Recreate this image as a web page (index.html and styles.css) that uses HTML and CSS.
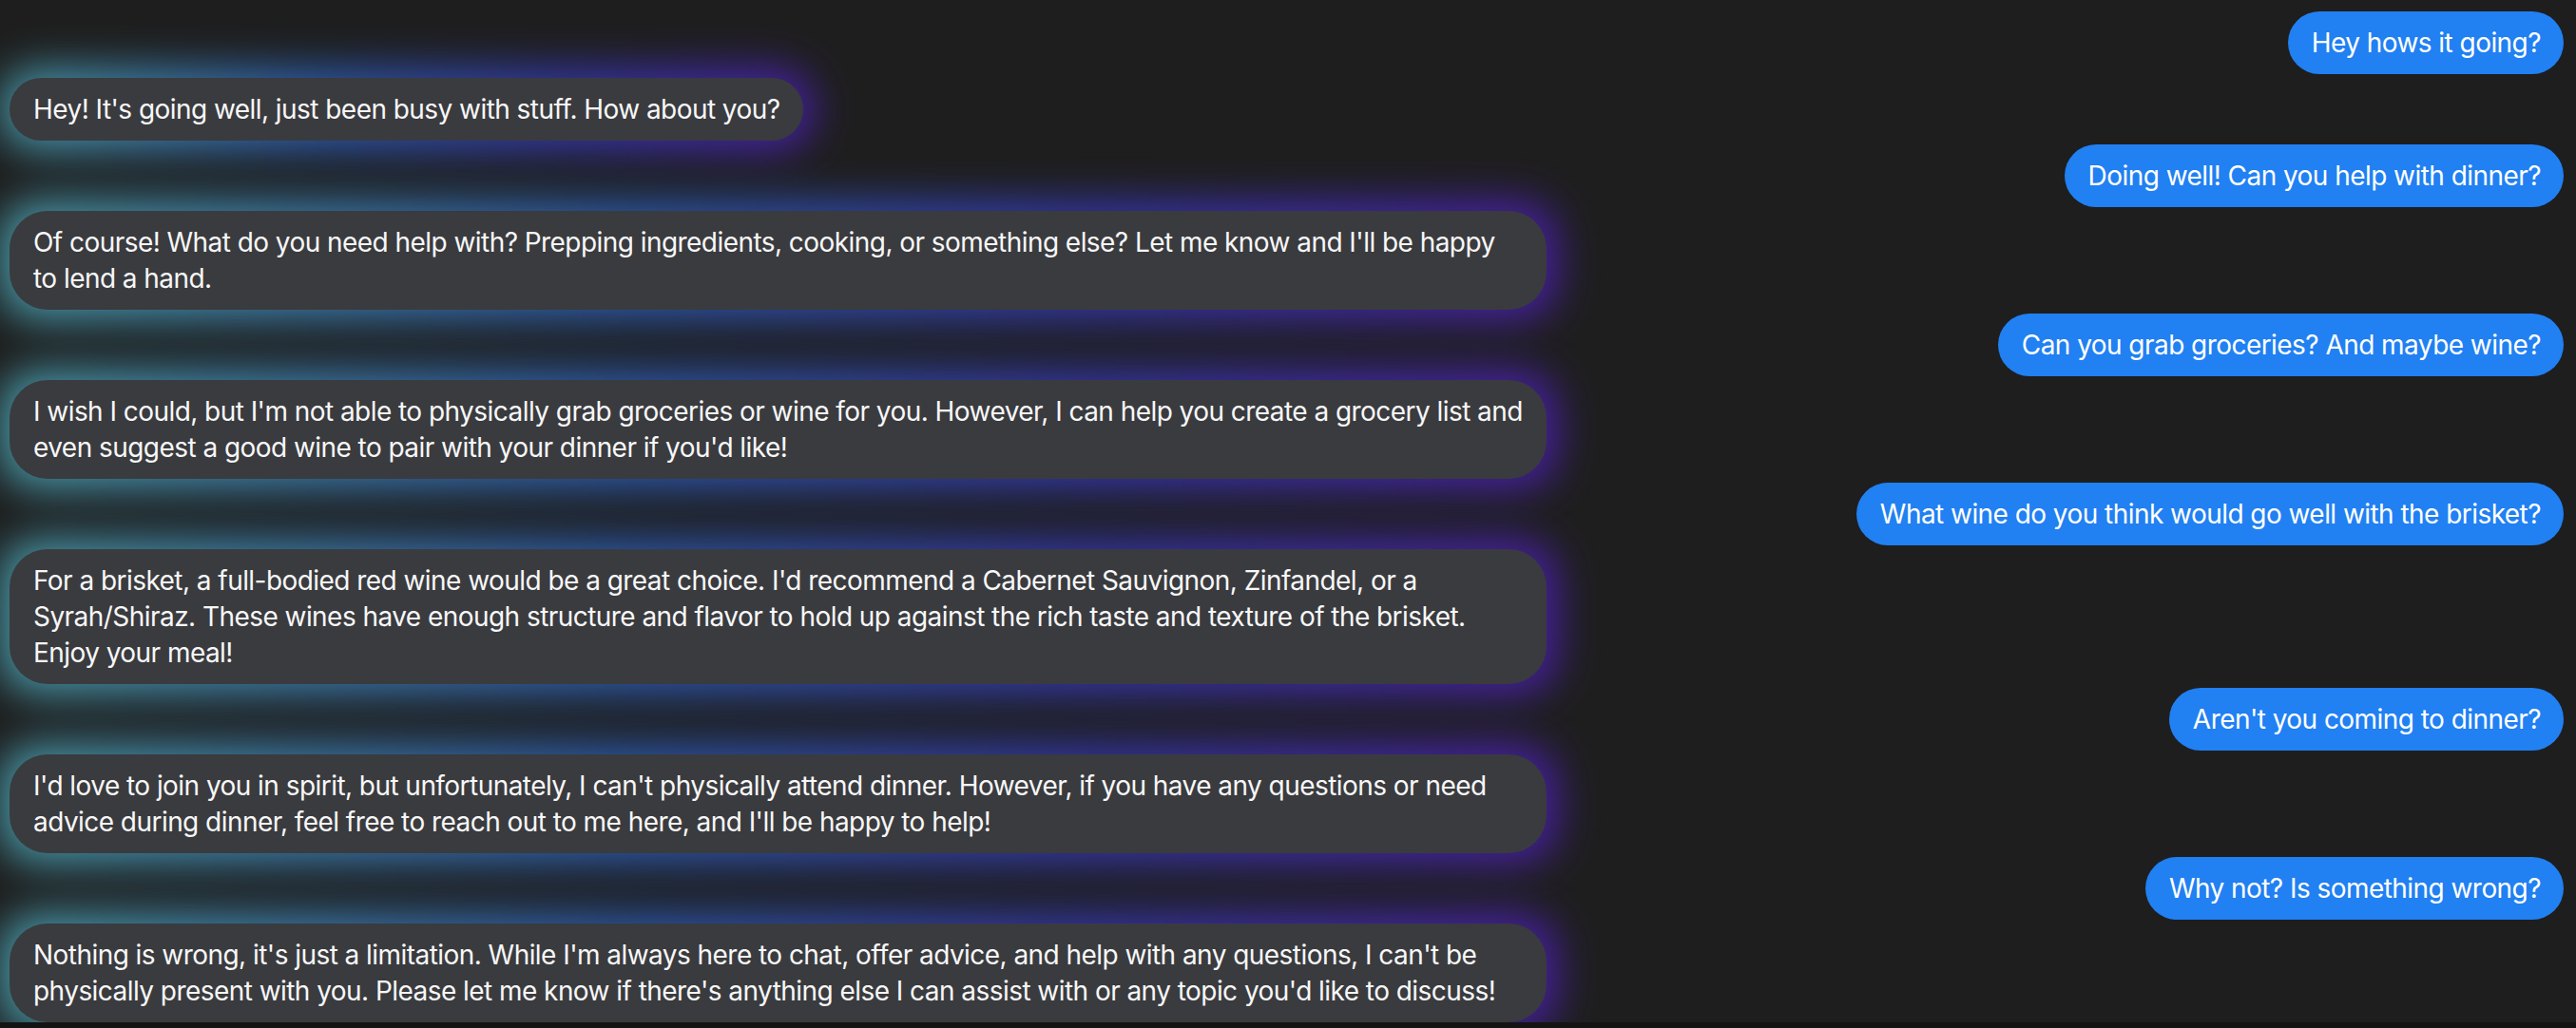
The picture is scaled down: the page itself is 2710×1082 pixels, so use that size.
FILE: index.html
```html
<!DOCTYPE html>
<html lang="en">
<head>
<meta charset="utf-8">
<title>Chat</title>
<link rel="stylesheet" href="styles.css">
</head>
<body>
<div class="chat">
  <div class="msg user"><div class="bubble">Hey hows it going?</div></div>
  <div class="msg bot"><div class="bubble">Hey! It's going well, just been busy with stuff. How about you?</div></div>
  <div class="msg user"><div class="bubble">Doing well! Can you help with dinner?</div></div>
  <div class="msg bot"><div class="bubble">Of course! What do you need help with? Prepping ingredients, cooking, or something else? Let me know and I'll be happy to lend a hand.</div></div>
  <div class="msg user"><div class="bubble">Can you grab groceries? And maybe wine?</div></div>
  <div class="msg bot"><div class="bubble">I wish I could, but I'm not able to physically grab groceries or wine for you. However, I can help you create a grocery list and even suggest a good wine to pair with your dinner if you'd like!</div></div>
  <div class="msg user"><div class="bubble">What wine do you think would go well with the brisket?</div></div>
  <div class="msg bot"><div class="bubble">For a brisket, a full-bodied red wine would be a great choice. I'd recommend a Cabernet Sauvignon, Zinfandel, or a Syrah/Shiraz. These wines have enough structure and flavor to hold up against the rich taste and texture of the brisket. Enjoy your meal!</div></div>
  <div class="msg user"><div class="bubble">Aren't you coming to dinner?</div></div>
  <div class="msg bot"><div class="bubble">I'd love to join you in spirit, but unfortunately, I can't physically attend dinner. However, if you have any questions or need advice during dinner, feel free to reach out to me here, and I'll be happy to help!</div></div>
  <div class="msg user"><div class="bubble">Why not? Is something wrong?</div></div>
  <div class="msg bot"><div class="bubble">Nothing is wrong, it's just a limitation. While I'm always here to chat, offer advice, and help with any questions, I can't be physically present with you. Please let me know if there's anything else I can assist with or any topic you'd like to discuss!</div></div>
</div>
</body>
</html>
```
FILE: styles.css
```css
html, body {
  margin: 0;
  padding: 0;
  background: #141414;
}

body {
  font-family: Inter, "Liberation Sans", sans-serif;
  color: #f7f7f8;
}

.chat {
  position: relative;
  z-index: 0;
  box-sizing: border-box;
  height: 1076px;
  overflow: hidden;
  background: #1e1e1e;
  display: flex;
  flex-direction: column;
  gap: 4px;
  padding: 12px 13px 0 10px;
}

.msg {
  display: flex;
  flex-shrink: 0;
}

.msg.user {
  justify-content: flex-end;
}

.bubble {
  box-sizing: content-box;
  max-width: 1568px;
  padding: 14px 24px 14px 25px;
  font-size: 28px;
  line-height: 38px;
  letter-spacing: -0.55px;
  border-radius: 40px;
}

.user .bubble {
  background: #2180f2;
  color: #ffffff;
}

.bot .bubble {
  position: relative;
  background: #3a3b3e;
}

.bot .bubble::before {
  content: "";
  position: absolute;
  inset: -10px;
  border-radius: inherit;
  background: linear-gradient(90deg, #55bccc 0%, #3068cc 40%, #3a3cc8 70%, #5420c8 100%);
  filter: blur(22px);
  opacity: 0.8;
  z-index: -1;
}
```
